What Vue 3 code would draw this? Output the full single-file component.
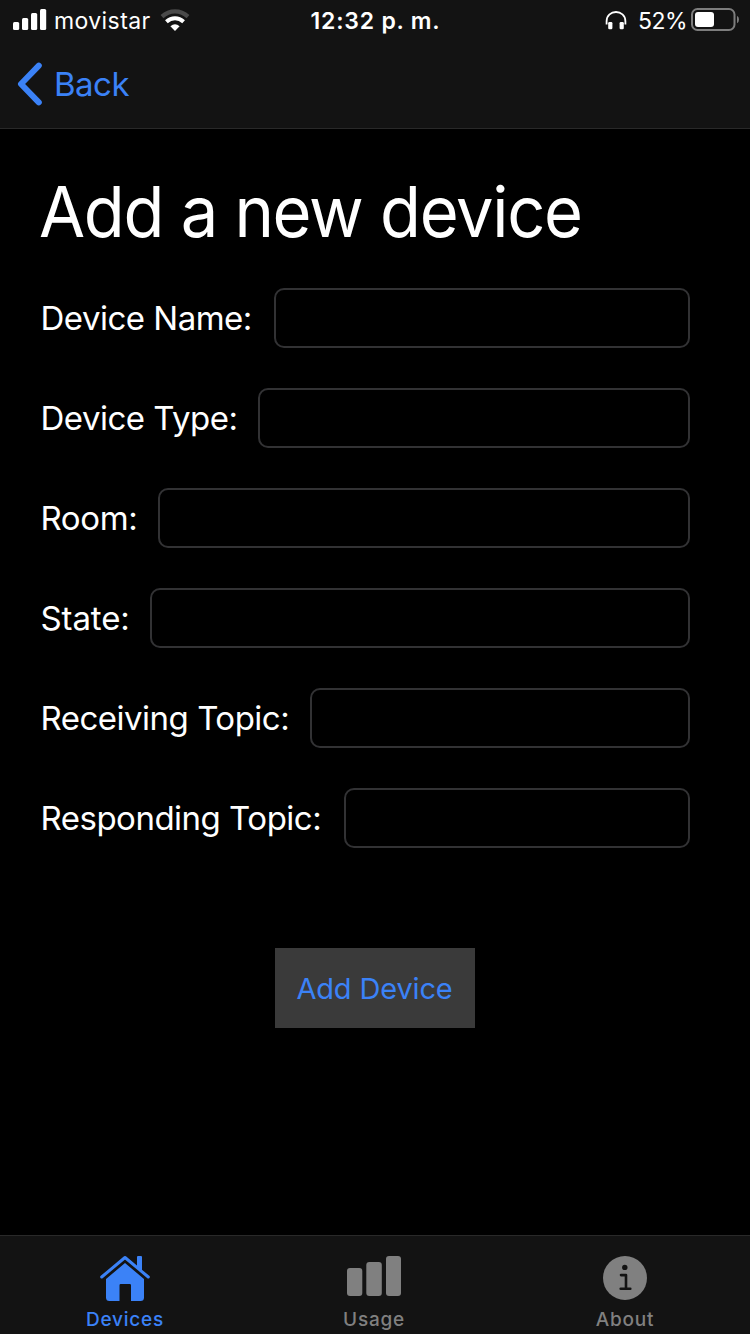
<script setup>
const fields = [
  { id: 'name', label: 'Device Name:', width: 234 },
  { id: 'type', label: 'Device Type:', width: 218 },
  { id: 'room', label: 'Room:', width: 118 },
  { id: 'state', label: 'State:', width: 110 },
  { id: 'receiving', label: 'Receiving Topic:', width: 270 },
  { id: 'responding', label: 'Responding Topic:', width: 304 },
]
</script>

<template>
  <div class="screen">
    <header class="header">
      <div class="status">
        <div class="status-left">
          <svg class="signal" width="34" height="22" viewBox="0 0 34 22" fill="#fff">
            <rect x="0" y="13" width="6.2" height="8" rx="1.5" />
            <rect x="9" y="9" width="6.2" height="12" rx="1.5" />
            <rect x="18" y="4" width="6.2" height="17" rx="1.5" />
            <rect x="27" y="0" width="6.2" height="21" rx="1.5" />
          </svg>
          <span class="carrier">movistar</span>
          <svg class="wifi" width="30" height="22" viewBox="0 0 30 22">
            <path d="M2 7.6C9.5 .6 20.5 .6 28 7.6" fill="none" stroke="#4a4a4a" stroke-width="4.2" />
            <path d="M6.4 12.8C11.5 8.2 18.5 8.2 23.6 12.8" fill="none" stroke="#fff" stroke-width="4" />
            <path d="M10.4 17.3Q15 13.4 19.6 17.3L15 22Z" fill="#fff" />
          </svg>
        </div>
        <span class="time">12:32 p. m.</span>
        <div class="status-right">
          <svg class="phones" width="22" height="20" viewBox="0 0 22 20">
            <path d="M1.6 13.5V10.3C1.6-2.1 20.4-2.1 20.4 10.3V13.5" fill="none" stroke="#fff" stroke-width="1.8" />
            <rect x="3.2" y="11" width="4.2" height="7.2" rx="1.2" fill="#fff" />
            <rect x="14.6" y="11" width="4.2" height="7.2" rx="1.2" fill="#fff" />
          </svg>
          <span class="percent">52%</span>
          <svg class="battery" width="49" height="24" viewBox="0 0 49 24">
            <rect x="1" y="1" width="42.5" height="21" rx="5.5" fill="none" stroke="#7d7d7d" stroke-width="2" />
            <rect x="4" y="4" width="19" height="15" rx="3" fill="#fff" />
            <path d="M46 7.8Q48 8.8 48 11.5T46 15.2Z" fill="#7d7d7d" />
          </svg>
        </div>
      </div>
      <a class="back">
        <svg width="26" height="44" viewBox="0 0 26 44">
          <path d="M22.8 3.6L5 22L22.8 40.4" fill="none" stroke="#3b82f7" stroke-width="6" stroke-linecap="round" stroke-linejoin="round" />
        </svg>
        <span>Back</span>
      </a>
    </header>

    <main class="content">
      <h1>Add a new device</h1>
      <form class="form" @submit.prevent>
        <div v-for="f in fields" :key="f.id" class="row">
          <label :for="f.id" :style="{ width: f.width + 'px' }"><span :class="f.id">{{ f.label }}</span></label>
          <input :id="f.id" type="text" />
        </div>
        <button type="submit" class="submit"><span>Add Device</span></button>
      </form>
    </main>

    <nav class="tabs">
      <a class="tab active">
        <svg width="52" height="46" viewBox="0 0 52 46">
          <path d="M2.7 22L26 2.5L49.3 22" fill="none" stroke="currentColor" stroke-width="3" stroke-linejoin="round" stroke-linecap="round" />
          <path d="M38 2Q38 1 39 1H42Q43 1 43 2V17L38 12.5Z" fill="currentColor" />
          <path d="M26 8L45 24V42.5Q45 46 41.5 46H32V30.2Q32 29 30.8 29H21.7Q20.5 29 20.5 30.2V46H10.5Q7 46 7 42.5V24Z" fill="currentColor" />
        </svg>
        <span>Devices</span>
      </a>
      <a class="tab usage">
        <svg width="54" height="46" viewBox="0 0 54 46" fill="currentColor">
          <rect x="0" y="13" width="15.3" height="28" rx="3" />
          <rect x="19.3" y="7" width="15.5" height="34" rx="3" />
          <rect x="39" y="1" width="15" height="40" rx="3" />
        </svg>
        <span>Usage</span>
      </a>
      <a class="tab">
        <svg width="44" height="46" viewBox="0 0 44 46">
          <circle cx="22" cy="23" r="22" fill="currentColor" />
          <circle cx="21.8" cy="12.4" r="2.7" fill="#131313" />
          <path d="M18 20.1H23V33.7M17.7 33.7H27.3" fill="none" stroke="#131313" stroke-width="2.6" stroke-linecap="round" stroke-linejoin="round" />
        </svg>
        <span>About</span>
      </a>
    </nav>
  </div>
</template>

<style>
body {
  margin: 0;
  background: #000;
}
</style>

<style scoped>
.screen {
  width: 750px;
  height: 1334px;
  display: flex;
  flex-direction: column;
  background: #000;
  color: #fff;
  font-family: Inter, "Liberation Sans", sans-serif;
  overflow: hidden;
}
.screen span,
h1 {
  white-space: nowrap;
}
.header {
  box-sizing: border-box;
  height: 129px;
  background: #131313;
  border-bottom: 1px solid #292929;
}
.status {
  height: 40px;
  display: grid;
  grid-template-columns: 1fr auto 1fr;
}
.status-left,
.status-right {
  display: flex;
  align-items: flex-start;
}
.status-left {
  padding-left: 13px;
}
.status-left svg,
.status-right svg {
  flex: none;
}
.signal {
  margin-top: 9px;
}
.carrier {
  width: 96px;
  margin: 6px 10px 0 7px;
  font-size: 23px;
  line-height: 30px;
  letter-spacing: 0.4px;
}
.wifi {
  margin-top: 9px;
}
.time {
  margin-top: 6px;
  padding-left: 1px;
  font-size: 23px;
  line-height: 30px;
  font-weight: 600;
  letter-spacing: 0.8px;
}
.status-right {
  justify-content: flex-end;
  padding-right: 10px;
}
.phones {
  margin: 11px 11px 0 0;
}
.percent {
  width: 53px;
  margin-top: 6px;
  font-size: 23px;
  line-height: 30px;
  letter-spacing: -0.5px;
}
.battery {
  margin-top: 8px;
}
.back {
  display: flex;
  align-items: center;
  height: 88px;
  padding-left: 16px;
  gap: 12px;
  color: #3b82f7;
  font-size: 33px;
  letter-spacing: -0.5px;
}
.content {
  flex: 1;
  padding: 43px 60px 0 39px;
}
h1 {
  margin: 0;
  font-size: 70px;
  line-height: 80px;
  font-weight: 400;
  letter-spacing: -1.35px;
  transform: scaleX(0.955);
  transform-origin: left;
}
.form {
  display: flex;
  flex-direction: column;
  gap: 40px;
  margin: 36px 0 0 1px;
}
.row {
  display: flex;
  height: 60px;
}
label {
  flex: none;
  box-sizing: border-box;
  padding-left: 0.5px;
  font-size: 33px;
  line-height: 60px;
  letter-spacing: -0.5px;
}
.room {
  letter-spacing: -0.4px;
}
.state {
  letter-spacing: -0.1px;
}
input {
  flex: 1;
  min-width: 0;
  box-sizing: border-box;
  border: 2px solid #323234;
  border-radius: 10px;
  background: #000;
  color: #fff;
  font: inherit;
  font-size: 30px;
  padding: 0 12px;
  outline: none;
}
.submit {
  width: 200px;
  height: 80px;
  margin: 60px 0 0 235px;
  padding: 0;
  border: 0;
  background: #3a3a3a;
  color: #3b82f7;
  font-family: inherit;
  font-size: 29px;
  letter-spacing: -0.15px;
}
.submit span {
  padding-right: 1px;
}
.tabs {
  box-sizing: border-box;
  height: 99px;
  display: grid;
  grid-template-columns: repeat(3, 1fr);
  background: #131313;
  border-top: 1px solid #292929;
}
.tab {
  display: flex;
  flex-direction: column;
  align-items: center;
  padding-top: 19px;
  color: #808080;
  font-size: 19px;
  line-height: 24px;
  font-weight: 500;
  letter-spacing: 0.75px;
}
.tab span {
  margin-top: 7px;
}
.usage {
  padding-right: 2px;
}
.active {
  color: #3b82f7;
}
</style>
